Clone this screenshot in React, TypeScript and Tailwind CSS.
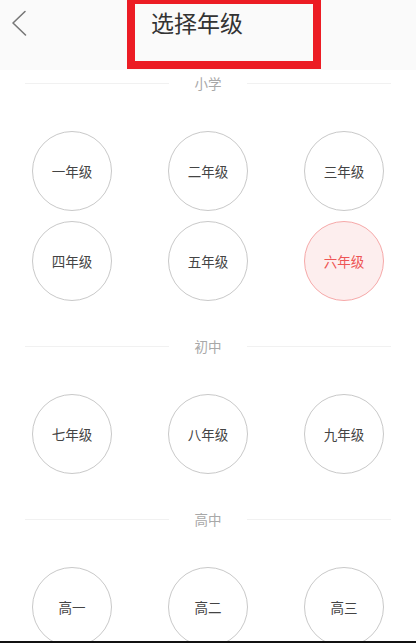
import React from "react";

type Grade = { label: string; active?: boolean };

const SECTIONS: { title: string; rows: Grade[][] }[] = [
  {
    title: "小学",
    rows: [
      [{ label: "一年级" }, { label: "二年级" }, { label: "三年级" }],
      [{ label: "四年级" }, { label: "五年级" }, { label: "六年级", active: true }],
    ],
  },
  {
    title: "初中",
    rows: [[{ label: "七年级" }, { label: "八年级" }, { label: "九年级" }]],
  },
  {
    title: "高中",
    rows: [[{ label: "高一" }, { label: "高二" }, { label: "高三" }]],
  },
];

function SectionTitle({ title }: { title: string }) {
  return (
    <div className="flex items-center h-[20px] px-[25px]">
      <div className="flex-1 h-px bg-[#f1f1f1]" />
      <span className="w-[78px] text-center text-[13.5px] leading-[20px] text-[#a8a8a8]">
        {title}
      </span>
      <div className="flex-1 h-px bg-[#f1f1f1]" />
    </div>
  );
}

function GradeCircle({ grade }: { grade: Grade }) {
  return (
    <div
      className={
        grade.active
          ? "w-[80px] h-[80px] rounded-full border-[1.5px] border-[#f6a9a9] bg-[#fdeeee] flex items-center justify-center text-[13.5px] text-[#ee5555]"
          : "w-[80px] h-[80px] rounded-full border-[1.5px] border-[#c9c9c9] bg-white flex items-center justify-center text-[13.5px] text-[#444444]"
      }
    >
      {grade.label}
    </div>
  );
}

export default function App() {
  return (
    <div
      className="w-[416px] h-[643px] flex flex-col bg-white overflow-hidden"
      style={{ fontFamily: '"Noto Sans CJK SC", "Noto Sans", sans-serif' }}
    >
      <header className="relative h-[70px] shrink-0 bg-[#fafafa] flex items-start">
        <svg
          className="ml-[11px] mt-[10px]"
          width="18"
          height="28"
          viewBox="0 0 18 28"
          fill="none"
        >
          <path
            d="M14 1.5 L2 13 L14.5 25"
            stroke="#777777"
            strokeWidth="1.6"
            strokeLinecap="round"
            strokeLinejoin="round"
          />
        </svg>
        <h1 className="ml-[122px] mt-[7px] text-[23px] leading-[30px] text-[#333333] font-normal">
          选择年级
        </h1>
        {/* red annotation box */}
        <div className="absolute left-[127px] top-0 w-[194px] h-[69px] border-x-[8px] border-b-[8px] border-t-[4px] border-[#ec1c24]" />
      </header>

      <main className="flex-1 overflow-hidden flex flex-col">
        {SECTIONS.map((section, i) => (
          <section
            key={section.title}
            className={i === 0 ? "mt-[3px]" : "mt-[35px]"}
          >
            <SectionTitle title={section.title} />
            <div className="mt-[38px] flex flex-col gap-[10px]">
              {section.rows.map((row, r) => (
                <div key={r} className="flex justify-between px-[32px]">
                  {row.map((g) => (
                    <GradeCircle key={g.label} grade={g} />
                  ))}
                </div>
              ))}
            </div>
          </section>
        ))}
      </main>
      <div className="h-[2px] shrink-0 bg-[#111111]" />
    </div>
  );
}
